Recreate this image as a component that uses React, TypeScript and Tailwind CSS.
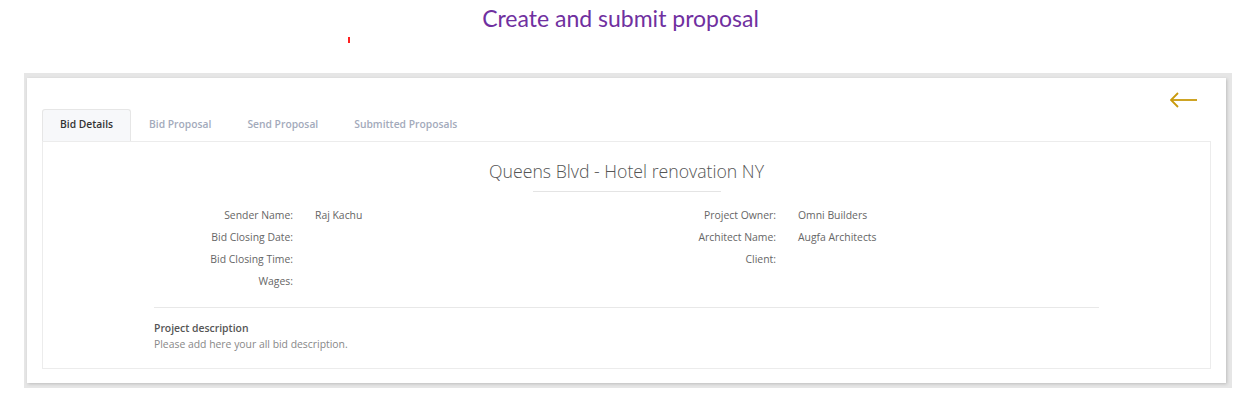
import React from "react";

const labelFont = { fontFamily: '"Open Sans", "Liberation Sans", sans-serif' };

function Row({ label, value, labelW }: { label: string; value?: string; labelW: string }) {
  return (
    <div className="flex h-[22px] items-center">
      <div className={`${labelW} shrink-0 text-right text-[10.4px] text-[#666]`}>{label}</div>
      <div className="ml-[22px] text-[10.4px] text-[#666]">{value}</div>
    </div>
  );
}

export default function App() {
  const tabs = ["Bid Details", "Bid Proposal", "Send Proposal", "Submitted Proposals"];
  return (
    <div className="w-[1251px] h-[403px] bg-white" style={labelFont}>
      <div
        className="h-[36px] flex items-center justify-center pr-[10px] text-[23px] font-normal text-[#7030a0]"
        style={{ fontFamily: 'Lato, "Open Sans", sans-serif' }}
      >
        Create and submit proposal
      </div>
      <div className="h-[36px]">
        <div className="ml-[348px] mt-[1px] w-[2px] h-[6px] bg-[#ff2020]" />
      </div>
      <div className="ml-[24px] w-[1208px] bg-[#e6e6e6] pt-[5px] pl-[3px] pr-[6px] pb-[5px]">
        <div className="bg-white h-[305px] shadow-[1px_1px_3px_rgba(0,0,0,0.18)] pl-[15px] pr-[15px]">
          <div className="flex justify-end pr-[13px] pt-[14px] h-[31px]">
            <svg width="28" height="16" viewBox="0 0 28 16" fill="none">
              <path d="M1 8 H27" stroke="#c99a0c" strokeWidth="1.8" />
              <path d="M8 1 L1 8 L8 15" stroke="#c99a0c" strokeWidth="1.8" strokeLinejoin="miter" />
            </svg>
          </div>
          <div className="flex h-[32px]">
            {tabs.map((t, i) => (
              <div
                key={t}
                className={
                  i === 0
                    ? "flex items-center px-[17px] pb-[1px] text-[10.3px] font-semibold text-[#333] bg-[#f7f8fa] border border-b-0 border-[#e6e6e6] rounded-t-[3px]"
                    : "flex items-center px-[18px] pb-[1px] text-[10.3px] font-semibold text-[#a3aabb]"
                }
              >
                {t}
              </div>
            ))}
          </div>
          <div className="border border-[#ececec] h-[228px]">
            <div className="flex flex-col items-center pt-[17px]">
              <div className="text-[17.7px] font-light text-[#555] leading-[24px]">
                Queens Blvd - Hotel renovation NY
              </div>
              <div className="mt-[8px] w-[188px] h-px bg-[#e4e4e4]" />
            </div>
            <div className="mx-[111px] mt-[13px]">
              <div className="flex">
                <div className="w-[472px]">
                  <Row labelW="w-[139px]" label="Sender Name:" value="Raj Kachu" />
                  <Row labelW="w-[139px]" label="Bid Closing Date:" />
                  <Row labelW="w-[139px]" label="Bid Closing Time:" />
                  <Row labelW="w-[139px]" label="Wages:" />
                </div>
                <div className="w-[472px]">
                  <Row labelW="w-[150px]" label="Project Owner:" value="Omni Builders" />
                  <Row labelW="w-[150px]" label="Architect Name:" value="Augfa Architects" />
                  <Row labelW="w-[150px]" label="Client:" />
                </div>
              </div>
              <div className="mt-[14px] h-px bg-[#e8e8e8]" />
              <div className="mt-[12px] text-[10.4px] font-semibold text-[#555] leading-[16px]">
                Project description
              </div>
              <div className="text-[10.4px] text-[#888] leading-[16px]">
                Please add here your all bid description.
              </div>
            </div>
          </div>
        </div>
      </div>
    </div>
  );
}
